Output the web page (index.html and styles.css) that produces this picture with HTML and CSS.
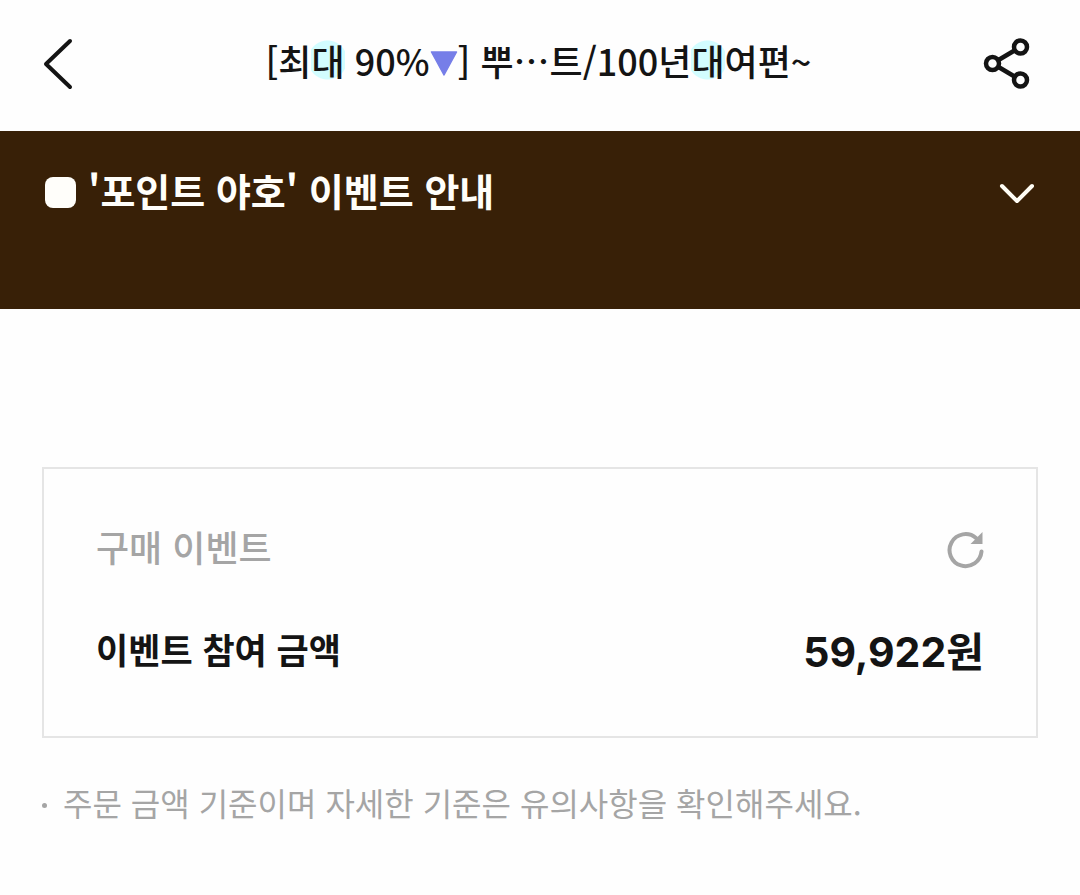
FILE: index.html
```html
<!DOCTYPE html>
<html lang="ko">
<head>
<meta charset="utf-8">
<meta name="viewport" content="width=device-width, initial-scale=1">
<title>이벤트</title>
<link rel="stylesheet" href="styles.css">
</head>
<body>
<header class="topbar">
  <button class="icon-btn" type="button" aria-label="뒤로">
    <svg width="32" height="52" viewBox="0 0 32 52" fill="none" stroke="#141414" stroke-width="4" stroke-linecap="round" stroke-linejoin="round"><path d="M28 3 4 26l24 23"/></svg>
  </button>
  <h1 class="title">[최<span class="glow">대</span> 90%<svg class="down" width="28" height="25" viewBox="0 0 28 25" aria-hidden="true"><path d="M1.5 1h25L14 24z" fill="#767ee8" stroke="#767ee8" stroke-width="1.5" stroke-linejoin="round"/></svg>] 뿌⋯트/100년<span class="glow">대</span>여편~</h1>
  <button class="icon-btn" type="button" aria-label="공유">
    <svg width="48" height="52" viewBox="0 0 48 52" fill="none" stroke="#141414" stroke-width="4.500"><circle cx="9.500" cy="25.500" r="6.500"/><circle cx="37.500" cy="9" r="6.500"/><circle cx="37.500" cy="42" r="6.500"/><path d="m15.500 22 16-9.500M15.500 29l16 9.500"/></svg>
  </button>
</header>
<main>
  <section class="banner">
    <button class="banner-toggle" type="button" aria-expanded="false">
      <span class="square"></span>
      <span class="banner-text">'포인트 야호' 이벤트 안내</span>
      <svg class="chevron" width="36" height="22" viewBox="0 0 36 22" fill="none" stroke="#fffdf5" stroke-width="4" stroke-linecap="round" stroke-linejoin="round"><path d="m3 3 15 15L33 3"/></svg>
    </button>
  </section>
  <section class="event">
    <div class="card">
      <div class="row">
        <h2 class="label">구매 이벤트</h2>
        <button class="icon-btn" type="button" aria-label="새로고침">
          <svg width="38" height="40" viewBox="0 0 38 40"><path d="M35.500 22.500a16 16 0 1 1-5.500-13.500" fill="none" stroke="#a5a5a5" stroke-width="4" stroke-linecap="round"/><path d="M36.500 3v12H24.500z" fill="#a5a5a5"/></svg>
        </button>
      </div>
      <div class="row">
        <span class="name">이벤트 참여 금액</span>
        <strong class="amount">59,922원</strong>
      </div>
    </div>
    <ul class="notes">
      <li class="note">주문 금액 기준이며 자세한 기준은 유의사항을 확인해주세요.</li>
    </ul>
  </section>
</main>
</body>
</html>
```
FILE: styles.css
```css
* {
  box-sizing: border-box;
}

body {
  margin: 0;
  background: #fefefe;
  color: #141414;
  font-family: "Noto Sans CJK KR", sans-serif;
}

h1, h2, ul {
  margin: 0;
  padding: 0;
}

button {
  border: 0;
  padding: 0;
  background: none;
  color: inherit;
  font: inherit;
}

svg {
  display: block;
}

.topbar {
  display: flex;
  align-items: center;
  justify-content: space-between;
  padding: 36px 49px 40px 42px;
}

.icon-btn {
  flex: none;
}

.title {
  flex: 1;
  padding: 0 0 7px 20px;
  font-size: 36px;
  font-weight: 500;
  line-height: 48px;
  text-align: center;
  white-space: nowrap;
}

.glow {
  background: radial-gradient(circle closest-side, #d2fdff 0 19px, transparent 20px) center / 42px 42px no-repeat;
}

.down {
  display: inline-block;
}

.banner {
  min-height: 178px;
  padding: 32px 45px;
  background: #382007;
  color: #fffefa;
}

.banner-toggle {
  display: flex;
  align-items: center;
  gap: 12px;
  width: 100%;
  text-align: left;
}

.square {
  width: 31px;
  height: 31px;
  border-radius: 8px;
  background: #fffefa;
}

.banner-text {
  flex: 1;
  padding-bottom: 4px;
  font-size: 38px;
  font-weight: 700;
  line-height: 54px;
}

.chevron {
  margin-top: 4px;
}

.event {
  padding: 158px 42px 48px;
}

.card {
  display: flex;
  flex-direction: column;
  gap: 44px;
  padding: 52px 52px 53px;
  border: 2px solid #e5e5e5;
}

.row {
  display: flex;
  align-items: center;
  justify-content: space-between;
}

.label,
.name {
  padding-bottom: 6px;
  line-height: 50px;
}

.label {
  color: #a5a5a5;
  font-size: 36px;
  font-weight: 500;
}

.name {
  font-size: 35px;
  font-weight: 700;
}

.amount {
  font-family: Inter, "Noto Sans CJK KR", sans-serif;
  font-size: 41px;
  font-weight: 700;
  line-height: 62px;
}

.notes {
  margin-top: 40px;
  list-style: none;
}

.note {
  display: flex;
  align-items: center;
  gap: 16px;
  color: #a5a5a5;
  font-size: 32px;
  line-height: 48px;
}

.note::before {
  content: "";
  width: 5px;
  height: 5px;
  margin-top: 6px;
  border-radius: 50%;
  background: #a5a5a5;
}
```
